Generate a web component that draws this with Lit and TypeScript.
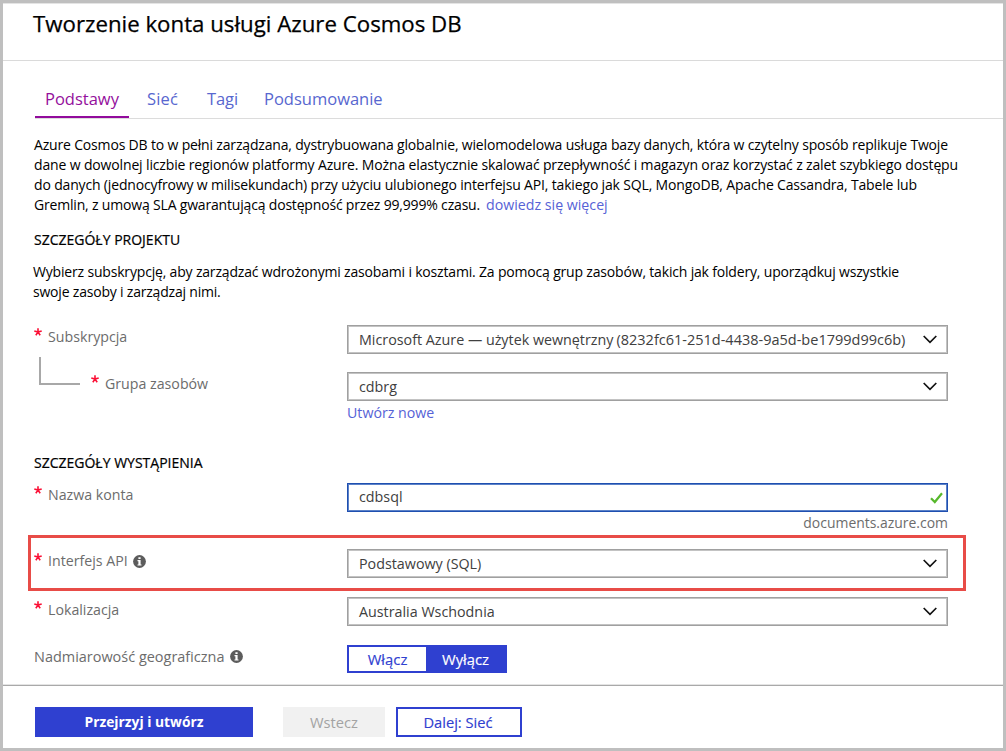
import { LitElement, html, css } from "lit";

const INTRO = [
  ["Azure Cosmos DB to w pełni zarządzana, dystrybuowana globalnie, wielomodelowa usługa bazy danych, która w czytelny sposób replikuje Twoje", "t1"],
  ["dane w dowolnej liczbie regionów platformy Azure. Można elastycznie skalować przepływność i magazyn oraz korzystać z zalet szybkiego dostępu", "t2"],
  ["do danych (jednocyfrowy w milisekundach) przy użyciu ulubionego interfejsu API, takiego jak SQL, MongoDB, Apache Cassandra, Tabele lub", "t3"],
];

const chevron = html`<svg class="chev" width="14" height="9" viewBox="0 0 14 9">
  <path d="M0.7 1 L7 7.3 L13.3 1" fill="none" stroke="#111" stroke-width="1.7" />
</svg>`;

const info = html`<svg class="info" width="13" height="13" viewBox="0 0 13 13">
  <circle cx="6.5" cy="6.5" r="6.4" fill="#5c5c5c" />
  <path d="M5.4 2.2h2.2v1.9H5.4z M4.5 5.1h3.1v4.3h.9v1.2h-4V9.4h.9V6.3h-.9z" fill="#fff" />
</svg>`;

const star = html`<svg class="star" width="8" height="8" viewBox="0 0 8 8">
  <path d="M4 4.1V0.2 M4 4.1L0.3 3 M4 4.1L7.7 3 M4 4.1L1.8 7.2 M4 4.1L6.2 7.2" stroke="#fb0f35" stroke-width="1.6" fill="none" />
</svg>`;

class AppRoot extends LitElement {
  static styles = css`
    :host {
      display: block;
      width: 1006px;
      height: 751px;
      font-family: "Open Sans", "Noto Sans", sans-serif;
      font-size: 14px;
      line-height: 20px;
      color: #000;
    }
    * { box-sizing: border-box; }
    .frame {
      width: 1006px;
      height: 751px;
      display: flex;
      flex-direction: column;
      background: #fff;
      border: 3px solid #bfbfbf;
      overflow: hidden;
      white-space: nowrap;
    }
    header {
      height: 58px;
      flex: none;
      border-top: 1px solid #e4e4e4;
      border-bottom: 1px solid #dadada;
      padding: 5px 0 0 30px;
    }
    h1 { margin: 0; font-size: 22.25px; line-height: 30px; font-weight: 400; -webkit-text-stroke: 0.25px currentColor; }
    nav {
      height: 58px;
      flex: none;
      margin-left: 32px;
      border-bottom: 1px solid #dcdcdc;
      display: flex;
      align-items: flex-end;
    }
    .tab {
      height: 34px;
      font-size: 16.5px;
      line-height: 29px;
      color: #5867cf;
    }
    .tab.active { width: 94px; padding-left: 10px; margin-right: 18px; color: #94109c; border-bottom: 2px solid #920b9c; }
    .tab.net { width: 60px; letter-spacing: 0.2px; }
    .tab.tags { width: 57px; letter-spacing: -0.1px; }
    main { flex: none; height: 566px; padding: 16px 0 0 31px; display: flex; flex-direction: column; }
    p { margin: 0; flex: none; }
    .line { display: block; }
    .t1 { letter-spacing: -0.17px; }
    .t2 { letter-spacing: -0.146px; }
    .t3 { letter-spacing: -0.163px; }
    .t4 { letter-spacing: -0.18px; }
    .t5 { letter-spacing: -0.178px; }
    .t6 { letter-spacing: -0.2px; }
    a { color: #5662d6; font-size: 14.2px; }
    p a { margin-left: 6px; }
    h2 { margin: 15px 0 0; flex: none; font-size: 14px; line-height: 20px; font-weight: 400; -webkit-text-stroke: 0.2px currentColor; }
    .about { margin: 12px 0 0 -1px; }
    .row { display: flex; flex: none; }
    .label { width: 313px; flex: none; display: flex; align-items: flex-start; font-size: 14.2px; color: #6c6c6c; }
    .star { margin: 1px 6px 0 0; }
    .info { margin: 4px 0 0 6px; }
    .branch { width: 41px; height: 28px; margin: -16px 11px 0 5px; border: solid #a8a8a8; border-width: 0 0 2px 2px; }
    .field {
      width: 601px;
      height: 29px;
      border: 1px solid #a0a0a0;
      box-shadow: inset 0 0 0 1px #c3c3c3;
      display: flex;
      align-items: center;
      justify-content: space-between;
      padding: 0 10px 0 11px;
      font-size: 14.3px;
      color: #404040;
    }
    .field.ok { border-color: #1f4fb0; box-shadow: inset 0 0 0 1px #5c82c8; padding-right: 4px; }
    .field.ok span { margin-top: -1px; }
    .id { margin-left: 3px; font-size: 14.5px; }
    .stack { display: flex; flex-direction: column; }
    .stack a { margin-top: 2px; }
    .suffix { align-self: flex-end; margin-top: 1px; font-size: 13.95px; color: #6c6c6c; }
    .subscription { margin-top: 23px; }
    .subscription .label { padding-top: 2px; }
    .group { margin-top: 18px; }
    .group .label { padding-top: 2px; }
    .group .branch { margin-top: -17px; }
    .instance { margin-top: 30px; }
    .account { margin-top: 10px; }
    .account .label { padding-top: 2px; }
    .mark { margin: 2px 0 0 -6px; width: 938px; height: 56px; border: 3px solid #e84c47; padding: 11px 0 0 3px; }
    .mark .label { padding-top: 2px; }
    .mark .star { margin-top: 2px; }
    .mark .info { margin-left: 5px; }
    .location { margin-top: 6px; }
    .location .label { padding-top: 3px; }
    .location .star { margin-top: 1px; }
    .geo { margin-top: 19px; }
    .geo .label { padding-top: 2px; font-size: 14.46px; }
    .geo .info { margin-top: 3px; }
    .switch { display: flex; width: 160px; height: 28px; border: 2px solid #2f40d0; font-size: 14.8px; line-height: 25px; text-align: center; color: #2f40d0; -webkit-text-stroke: 0.15px currentColor; }
    .switch span { width: 77px; }
    .switch .on { flex: 1; background: #2f40d0; color: #fff; }
    footer { flex: 1; border-top: 1px solid #a9a9a9; padding: 21px 0 0 32px; display: flex; align-items: flex-start; box-shadow: 0 -1px 0 #e4e4e4; }
    .btn { height: 30px; line-height: 30px; text-align: center; font-size: 14.7px; }
    .primary { width: 218px; background: #2f40d0; color: #fff; font-weight: 700; font-size: 13.8px; }
    .back { width: 102px; margin-left: 30px; background: #f1f1f1; color: #a3a3a3; }
    .next { width: 126px; margin-left: 11px; border: 2px solid #2f40d0; color: #2f40d0; line-height: 26px; padding-right: 2px; -webkit-text-stroke: 0.15px currentColor; }
  `;

  select(text: unknown) {
    return html`<div class="field"><span>${text}</span>${chevron}</div>`;
  }

  render() {
    return html`<div class="frame">
      <header><h1>Tworzenie konta usługi Azure Cosmos DB</h1></header>
      <nav>
        <div class="tab active">Podstawy</div>
        <div class="tab net">Sieć</div>
        <div class="tab tags">Tagi</div>
        <div class="tab">Podsumowanie</div>
      </nav>
      <main>
        <p>
          ${INTRO.map(([text, cls]) => html`<span class="line ${cls}">${text}</span>`)}
          <span class="line"><span class="t4">Gremlin, z umową SLA gwarantującą dostępność przez 99,999% czasu.</span><a>dowiedz się więcej</a></span>
        </p>
        <h2>SZCZEGÓŁY PROJEKTU</h2>
        <p class="about">
          <span class="line t5">Wybierz subskrypcję, aby zarządzać wdrożonymi zasobami i kosztami. Za pomocą grup zasobów, takich jak foldery, uporządkuj wszystkie</span>
          <span class="line t6">swoje zasoby i zarządzaj nimi.</span>
        </p>
        <div class="row subscription">
          <div class="label">${star}<span>Subskrypcja</span></div>
          ${this.select(html`Microsoft Azure — użytek wewnętrzny<span class="id">(8232fc61-251d-4438-9a5d-be1799d99c6b)</span>`)}
        </div>
        <div class="row group">
          <div class="label"><i class="branch"></i>${star}<span>Grupa zasobów</span></div>
          <div class="stack">${this.select("cdbrg")}<a>Utwórz nowe</a></div>
        </div>
        <h2 class="instance">SZCZEGÓŁY WYSTĄPIENIA</h2>
        <div class="row account">
          <div class="label">${star}<span>Nazwa konta</span></div>
          <div class="stack">
            <div class="field ok"><span>cdbsql</span>
              <svg width="13" height="12" viewBox="0 0 13 12"><path d="M1 6.2 L4.8 10 L12 1.2" fill="none" stroke="#57b82c" stroke-width="2.2" /></svg>
            </div>
            <span class="suffix">documents.azure.com</span>
          </div>
        </div>
        <div class="row mark">
          <div class="label">${star}<span>Interfejs API</span>${info}</div>
          ${this.select("Podstawowy (SQL)")}
        </div>
        <div class="row location">
          <div class="label">${star}<span>Lokalizacja</span></div>
          ${this.select("Australia Wschodnia")}
        </div>
        <div class="row geo">
          <div class="label"><span>Nadmiarowość geograficzna</span>${info}</div>
          <div class="switch"><span>Włącz</span><span class="on">Wyłącz</span></div>
        </div>
      </main>
      <footer>
        <div class="btn primary">Przejrzyj i utwórz</div>
        <div class="btn back">Wstecz</div>
        <div class="btn next">Dalej: Sieć</div>
      </footer>
    </div>`;
  }
}
customElements.define("app-root", AppRoot);
